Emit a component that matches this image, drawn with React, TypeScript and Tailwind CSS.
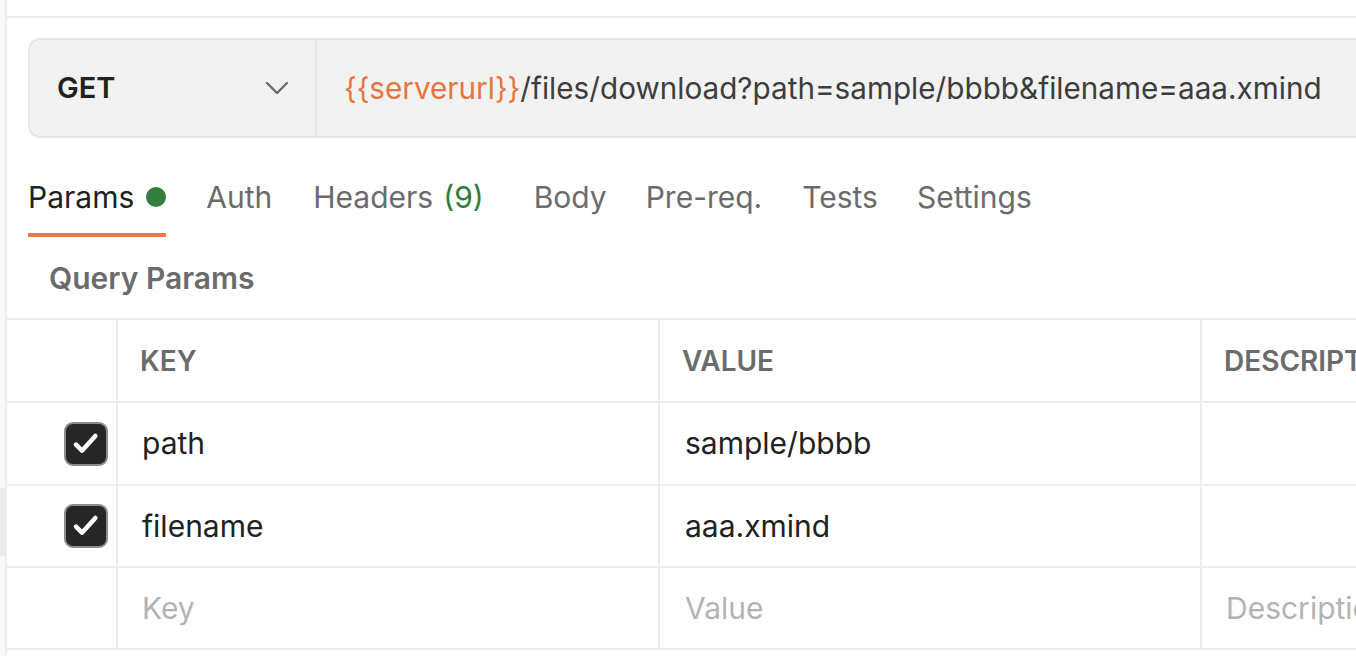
import React from 'react';

const inter = { fontFamily: 'Inter, "Noto Sans", sans-serif' };

type Row = { key: string; value: string; checked: boolean; h: string };

const rows: Row[] = [
  { key: 'path', value: 'sample/bbbb', checked: true, h: 'h-[83px]' },
  { key: 'filename', value: 'aaa.xmind', checked: true, h: 'h-[82px]' },
];

const Check = () => (
  <div className="w-[44px] h-[44px] rounded-[9px] bg-[#262626] border-2 border-[#8c8c8c] flex items-center justify-center">
    <svg width="32" height="32" viewBox="0 0 24 24" fill="none">
      <path d="M4.5 12.5l4.5 4.5 10-11" stroke="#fff" strokeWidth="3.4" strokeLinecap="round" strokeLinejoin="round" />
    </svg>
  </div>
);

export default function App() {
  return (
    <div className="w-[1356px] h-[656px] overflow-hidden bg-white flex" style={inter}>
      {/* left rail */}
      <div className="w-[7px] shrink-0 bg-[#f9f9f9] border-r-2 border-[#ededed] flex flex-col">
        <div className="h-[488px]" />
        <div className="h-[68px] bg-[#ebebeb]" />
      </div>

      <div className="flex-1 min-w-0 flex flex-col">
        <div className="h-[18px] shrink-0 border-b-2 border-[#ededed]" />

        {/* request bar */}
        <div className="mt-[20px] ml-[21px] w-[1400px] h-[100px] shrink-0 flex bg-[#f2f2f2] border-2 border-[#e6e6e6] rounded-[12px]">
          <div className="w-[287px] shrink-0 flex items-center justify-between pl-[27px] pr-[26px] border-r-2 border-[#e6e6e6]">
            <span className="text-[29px] font-semibold text-[#212121]">GET</span>
            <svg width="24" height="16" viewBox="0 0 24 16" fill="none">
              <path d="M2 3l10 10 10-10" stroke="#6b6b6b" strokeWidth="2.4" strokeLinecap="round" strokeLinejoin="round" />
            </svg>
          </div>
          <div className="flex items-center pl-[27px] text-[29.7px] text-[#3d3d3d] whitespace-nowrap">
            <span className="text-[#e8743f]">{'{{serverurl}}'}</span>
            <span>/files/download?path=sample/bbbb&amp;filename=aaa.xmind</span>
          </div>
        </div>

        {/* tabs */}
        <div className="mt-[38px] ml-[21px] flex items-start text-[30px] text-[#6b6b6b] h-[63px] shrink-0">
          <div className="flex flex-col">
            <div className="flex items-center gap-[12px] h-[42px]">
              <span className="text-[#212121]">Params</span>
              <span className="w-[20px] h-[20px] rounded-full bg-[#357d3c]" />
            </div>
            <div className="mt-[15px] h-[4px] bg-[#f07646]" />
          </div>
          <div className="h-[42px] flex items-center ml-[40px]">Auth</div>
          <div className="h-[42px] flex items-center ml-[41px]">
            Headers<span className="ml-[10px] text-[#2f7d3b]">(9)</span>
          </div>
          <div className="h-[42px] flex items-center ml-[50px]">Body</div>
          <div className="h-[42px] flex items-center ml-[39px]">Pre-req.</div>
          <div className="h-[42px] flex items-center ml-[40px]">Tests</div>
          <div className="h-[42px] flex items-center ml-[39px]">Settings</div>
        </div>

        <div className="ml-[42px] h-[79px] shrink-0 flex items-center text-[30px] font-semibold text-[#6b6b6b]">
          Query Params
        </div>

        {/* table */}
        <div className="border-t-2 border-[#ededed] w-[1400px]">
          <div className="grid grid-cols-[111px_542px_542px_205px] h-[83px] border-b-2 border-[#ededed] text-[28px] font-semibold text-[#6b6b6b]">
            <div className="border-r-2 border-[#ededed]" />
            <div className="border-r-2 border-[#ededed] flex items-center pl-[22px]">KEY</div>
            <div className="border-r-2 border-[#ededed] flex items-center pl-[22px]">VALUE</div>
            <div className="flex items-center pl-[22px] whitespace-nowrap">DESCRIPTION</div>
          </div>
          {rows.map((r) => (
            <div key={r.key} className={`grid grid-cols-[111px_542px_542px_205px] ${r.h} border-b-2 border-[#ededed] text-[30px] text-[#212121]`}>
              <div className="border-r-2 border-[#ededed] flex items-center justify-end pr-[8px]">
                <Check />
              </div>
              <div className="border-r-2 border-[#ededed] flex items-center pl-[24px]">{r.key}</div>
              <div className="border-r-2 border-[#ededed] flex items-center pl-[25px]">{r.value}</div>
              <div />
            </div>
          ))}
          <div className="grid grid-cols-[111px_542px_542px_205px] h-[82px] border-b-2 border-[#ededed] text-[30px] text-[#b3b3b3]">
            <div className="border-r-2 border-[#ededed]" />
            <div className="border-r-2 border-[#ededed] flex items-center pl-[24px]">Key</div>
            <div className="border-r-2 border-[#ededed] flex items-center pl-[25px]">Value</div>
            <div className="flex items-center pl-[24px] whitespace-nowrap">Description</div>
          </div>
        </div>
      </div>
    </div>
  );
}
